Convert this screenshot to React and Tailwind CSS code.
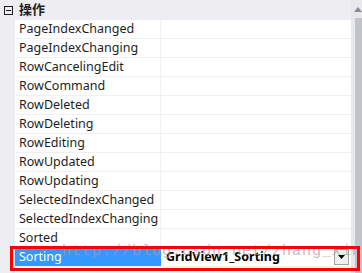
const EVENTS = [
  'PageIndexChanged',
  'PageIndexChanging',
  'RowCancelingEdit',
  'RowCommand',
  'RowDeleted',
  'RowDeleting',
  'RowEditing',
  'RowUpdated',
  'RowUpdating',
  'SelectedIndexChanged',
  'SelectedIndexChanging',
  'Sorted',
]

function Row({ label }) {
  return (
    <div className="flex h-[19px] border-b border-[#f0f0f0] bg-white">
      <div className="flex w-[146px] items-center border-r border-[#f0f0f0] pl-1 text-[12.5px] text-[#1e1e1e]">
        {label}
      </div>
      <div className="flex-1" />
    </div>
  )
}

export default function App() {
  return (
    <div
      className="relative flex h-[273px] w-[362px] overflow-hidden bg-[#eeeef2]"
      style={{ fontFamily: '"Noto Sans", "Noto Sans CJK SC", sans-serif' }}
    >
      <div className="w-[351px]">
        <div className="flex h-[20px] items-center">
          <div className="ml-[4px] flex h-[9px] w-[9px] items-center justify-center border border-[#1e1e1e]">
            <div className="h-px w-[5px] bg-[#1e1e1e]" />
          </div>
          <span className="ml-[6px] text-[13px] font-bold text-[#1e1e1e]">操作</span>
        </div>
        <div className="pl-[15px]">
          {EVENTS.map((e) => (
            <Row key={e} label={e} />
          ))}
          <div className="flex h-[19px] border-b border-[#f0f0f0] bg-white">
            <div className="flex w-[146px] items-center border-r border-[#3399ff] bg-[#3399ff] pl-1 text-[12.5px] text-white">
              Sorting
            </div>
            <div className="flex flex-1 items-center justify-between bg-white pl-[5px] pr-[2px]">
              <span className="text-[12.5px] font-bold text-black">GridView1_Sorting</span>
              <div className="flex h-[16px] w-[15px] items-center justify-center border border-[#a0a0a0] bg-[#f0f0f0]">
                <svg width="7" height="4" viewBox="0 0 7 4">
                  <path d="M0 0h7L3.5 4z" fill="#000" />
                </svg>
              </div>
            </div>
          </div>
          <div className="flex h-[19px] bg-white pl-1 text-[12.5px] text-[#1e1e1e]">…</div>
        </div>
      </div>

      <div className="flex w-[11px] flex-col items-end bg-[#e8e8ec]">
        <svg className="mt-[7px]" width="8" height="5" viewBox="0 0 8 5">
          <path d="M0 5L4 0 8 5z" fill="#868999" />
        </svg>
        <div className="mt-[6px] h-[260px] w-[7px] bg-[#c2c3c9]" />
      </div>

      <div
        className="pointer-events-none absolute left-[62px] top-[241px] text-[15px] tracking-[1px] text-[#a0a0a0]/70"
        style={{ fontFamily: '"Liberation Mono", monospace' }}
      >
        http://blog.csdn.net/zhang_xinxiu
      </div>

      <div className="pointer-events-none absolute left-[10px] top-[246px] h-[25px] w-[350px] border-[3px] border-[#ff0000]" />
    </div>
  )
}
